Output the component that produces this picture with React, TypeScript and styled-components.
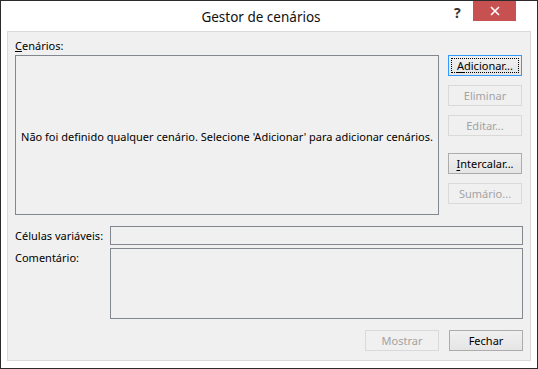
import React from "react";
import styled, { createGlobalStyle } from "styled-components";

const Global = createGlobalStyle`
  html, body { margin: 0; padding: 0; background: #ffffff; }
  body { font-family: "Noto Sans", "Open Sans", sans-serif; font-size: 11px; color: #000; }
  * { box-sizing: border-box; }
`;

const Window = styled.div`
  width: 538px;
  height: 369px;
  border: 1px solid #2b2b2b;
  background: #ffffff;
  display: flex;
  flex-direction: column;
  padding: 0 6px 7px 6px;
`;

const TitleBar = styled.div`
  height: 30px;
  display: flex;
  align-items: flex-start;
`;

const Title = styled.div`
  flex: 1;
  padding-left: 70px;
  text-align: center;
  font-size: 13.5px;
  line-height: 20px;
  padding-top: 6px;
  color: #111;
`;

const Help = styled.div`
  width: 28px;
  padding-top: 4px;
  font-size: 14px;
  font-weight: bold;
  color: #333;
  line-height: 16px;
  text-align: left;
  padding-left: 9px;
`;

const Close = styled.div`
  width: 43px;
  height: 20px;
  margin-right: 15px;
  background: #c75050;
  display: flex;
  align-items: center;
  justify-content: center;
`;

const Panel = styled.div`
  flex: 1;
  border: 1px solid #dadada;
  background: #f0f0f0;
  padding: 6px 7px 7px 7px;
  display: flex;
  flex-direction: column;
`;

const Label = styled.div`
  height: 17px;
  line-height: 16px;
  white-space: nowrap;
`;

const TopRow = styled.div`
  display: flex;
  gap: 9px;
`;

const ListBox = styled.div`
  width: 424px;
  height: 160px;
  border: 1px solid #828790;
  background: #f0f0f0;
  display: flex;
  align-items: center;
  justify-content: center;
  white-space: nowrap;
  padding-top: 2px;
`;

const ButtonColumn = styled.div`
  display: flex;
  flex-direction: column;
`;

const Button = styled.button<{ $disabled?: boolean; $focused?: boolean; $gap?: number }>`
  position: relative;
  width: 74px;
  height: 21px;
  margin-top: ${(p) => p.$gap ?? 0}px;
  padding: 0;
  font-family: "Noto Sans", "Open Sans", sans-serif;
  font-size: 11px;
  line-height: 18px;
  color: ${(p) => (p.$disabled ? "#a3a3a3" : "#000")};
  border: 1px solid ${(p) => (p.$focused ? "#3399ff" : p.$disabled ? "#d9d9d9" : "#acacac")};
  background: ${(p) => (p.$disabled ? "#f0f0f0" : "linear-gradient(#f0f0f0, #e5e5e5)")};
  outline: none;
  u { text-decoration-thickness: 1px; text-underline-offset: 2px; }
`;

const FocusRing = styled.span`
  position: absolute;
  inset: 2px;
  border: 1px dotted #000;
  pointer-events: none;
`;

const FieldRow = styled.div<{ $top: number; $align?: string }>`
  display: flex;
  align-items: ${(p) => p.$align ?? "center"};
  margin-top: ${(p) => p.$top}px;
`;

const FieldLabel = styled.div<{ $pad?: number }>`
  width: 95px;
  white-space: nowrap;
  padding-top: ${(p) => p.$pad ?? 0}px;
  line-height: 16px;
`;

const Field = styled.div<{ $h: number }>`
  width: 413px;
  height: ${(p) => p.$h}px;
  border: 1px solid #828790;
  background: #f0f0f0;
`;

const Footer = styled.div`
  margin-top: 11px;
  display: flex;
  justify-content: flex-end;
  gap: 10px;
`;

export default function App() {
  return (
    <>
      <Global />
      <Window>
        <TitleBar>
          <Title>Gestor de cenários</Title>
          <Help>?</Help>
          <Close>
            <svg width="10" height="10" viewBox="0 0 10 10">
              <path d="M1 1 L9 9 M9 1 L1 9" stroke="#fff" strokeWidth="1.6" />
            </svg>
          </Close>
        </TitleBar>
        <Panel>
          <Label>
            <u>C</u>enários:
          </Label>
          <TopRow>
            <ListBox>
              Não foi definido qualquer cenário. Selecione 'Adicionar' para adicionar cenários.
            </ListBox>
            <ButtonColumn>
              <Button $focused>
                <FocusRing />
                <u>A</u>dicionar...
              </Button>
              <Button $disabled $gap={9}>Eliminar</Button>
              <Button $disabled $gap={9}>Editar...</Button>
              <Button $gap={17}>
                <u>I</u>ntercalar...
              </Button>
              <Button $disabled $gap={9}>Sumário...</Button>
            </ButtonColumn>
          </TopRow>
          <FieldRow $top={11}>
            <FieldLabel>Células variáveis:</FieldLabel>
            <Field $h={19} />
          </FieldRow>
          <FieldRow $top={3} $align="flex-start">
            <FieldLabel $pad={2}>Comentário:</FieldLabel>
            <Field $h={71} />
          </FieldRow>
          <Footer>
            <Button $disabled>Mostrar</Button>
            <Button>Fechar</Button>
          </Footer>
        </Panel>
      </Window>
    </>
  );
}
